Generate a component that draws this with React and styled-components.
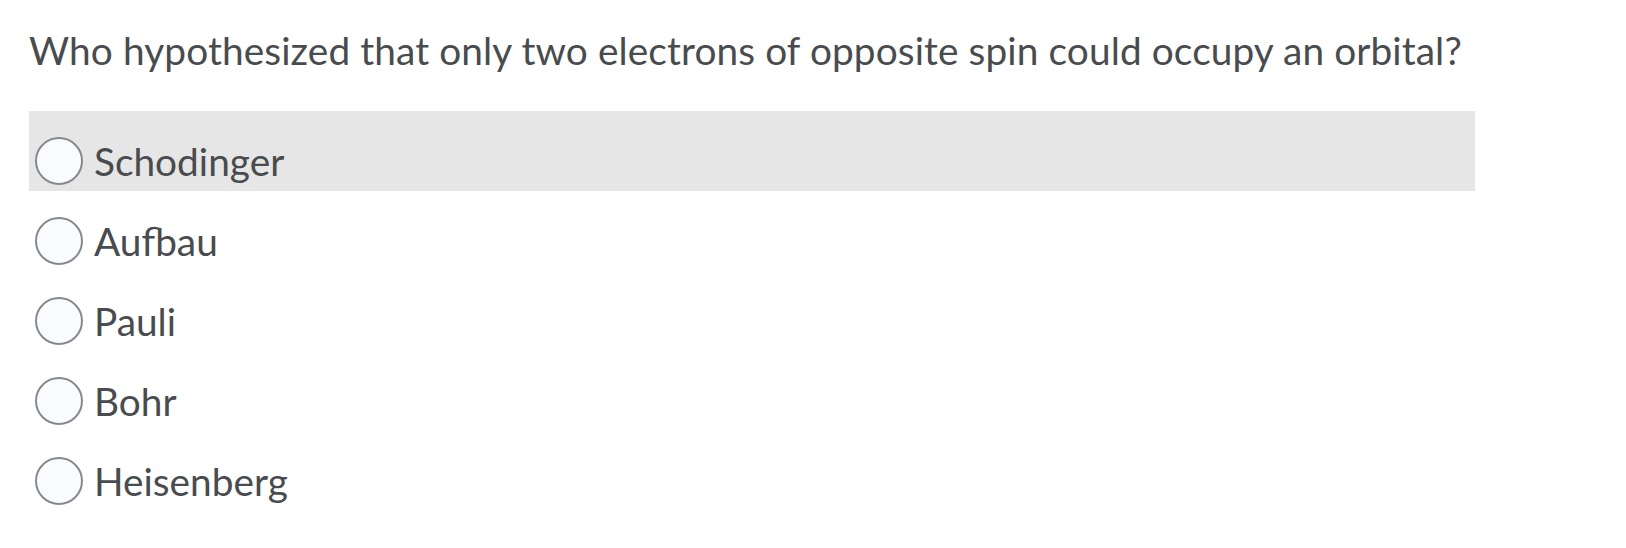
import React from "react";
import styled, { createGlobalStyle } from "styled-components";

const GlobalStyle = createGlobalStyle`
  body {
    margin: 0;
    background: #ffffff;
    font-family: Lato, "Noto Sans", sans-serif;
  }
`;

const Quiz = styled.div`
  padding: 27px 0 0 29px;
  width: 1446px;
`;

const Question = styled.p`
  margin: 0 0 37px;
  font-size: 38.8px;
  letter-spacing: 0.1px;
  line-height: 1.2;
  color: #494c4e;
  white-space: nowrap;
`;

const Options = styled.div`
  display: flex;
  flex-direction: column;
`;

const Option = styled.label`
  display: flex;
  align-items: center;
  gap: 11px;
  height: 80px;
  box-sizing: border-box;
  padding: 21px 0 0 6px;
  background: ${(p) => (p.$hover ? "#e6e6e6" : "transparent")};
  cursor: pointer;
`;

const Radio = styled.span`
  width: 48px;
  height: 48px;
  box-sizing: border-box;
  border-radius: 50%;
  border: 2px solid #868a8d;
  background: #f9fbff;
  flex-shrink: 0;
`;

const Label = styled.span`
  font-size: 38.8px;
  line-height: 1;
  color: #494c4e;
`;

const choices = ["Schodinger", "Aufbau", "Pauli", "Bohr", "Heisenberg"];

export default function App() {
  return (
    <>
      <GlobalStyle />
      <Quiz>
        <Question>
          Who hypothesized that only two electrons of opposite spin could occupy an orbital?
        </Question>
        <Options>
          {choices.map((c, i) => (
            <Option key={c} $hover={i === 0}>
              <Radio />
              <Label>{c}</Label>
            </Option>
          ))}
        </Options>
      </Quiz>
    </>
  );
}
